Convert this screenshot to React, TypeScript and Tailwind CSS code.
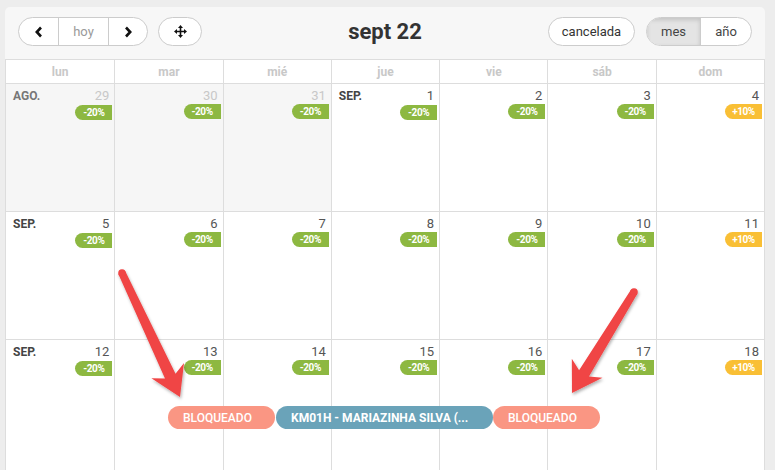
import React from "react";

type Day = { n: number; other?: boolean; label?: string; badge: string; warm?: boolean };

const weeks: Day[][] = [
  [
    { n: 29, other: true, label: "AGO.", badge: "-20%" },
    { n: 30, other: true, badge: "-20%" },
    { n: 31, other: true, badge: "-20%" },
    { n: 1, label: "SEP.", badge: "-20%" },
    { n: 2, badge: "-20%" },
    { n: 3, badge: "-20%" },
    { n: 4, badge: "+10%", warm: true },
  ],
  [
    { n: 5, label: "SEP.", badge: "-20%" },
    { n: 6, badge: "-20%" },
    { n: 7, badge: "-20%" },
    { n: 8, badge: "-20%" },
    { n: 9, badge: "-20%" },
    { n: 10, badge: "-20%" },
    { n: 11, badge: "+10%", warm: true },
  ],
  [
    { n: 12, label: "SEP.", badge: "-20%" },
    { n: 13, badge: "-20%" },
    { n: 14, badge: "-20%" },
    { n: 15, badge: "-20%" },
    { n: 16, badge: "-20%" },
    { n: 17, badge: "-20%" },
    { n: 18, badge: "+10%", warm: true },
  ],
];

const weekdays = ["lun", "mar", "mié", "jue", "vie", "sáb", "dom"];

function arrowPoints(tx: number, ty: number, px: number, py: number) {
  const dx = px - tx;
  const dy = py - ty;
  const len = Math.hypot(dx, dy);
  const d = [dx / len, dy / len];
  const n = [-d[1], d[0]];
  const hl = 29;
  const hw = 18;
  const join = 23;
  const tw = 3.8;
  const jw = 5.8;
  const at = (back: number, side: number) =>
    `${px - d[0] * back + n[0] * side},${py - d[1] * back + n[1] * side}`;
  return [
    at(len, tw),
    at(join, jw),
    at(hl, hw),
    at(0, 0),
    at(hl, -hw),
    at(join, -jw),
    at(len, -tw),
  ].join(" ");
}

function Cell({ day, first, tall }: { day: Day; first?: boolean; tall?: boolean }) {
  return (
    <div
      className={`${tall ? "h-[140px]" : "h-[128px]"} border-t border-[#dddddd] ${first ? "" : "border-l"} ${
        day.other ? "bg-[#f6f6f6]" : "bg-white"
      } flex flex-col items-stretch pt-[4px]`}
    >
      <div className="flex items-baseline justify-between pl-[7px] pr-[5px] leading-[15px]">
        <span
          className={`text-[12px] font-bold ${day.other ? "text-[#777777]" : "text-[#444444]"}`}
        >
          {day.label ?? ""}
        </span>
        <span className={`text-[13px] ${day.other ? "text-[#c8c8c8]" : "text-[#555555]"}`}>
          {day.n}
        </span>
      </div>
      <div className="flex justify-end pr-[2px] mt-[1px]">
        <span
          className={`w-[37px] h-[15px] rounded-l-full rounded-br-[8px] flex items-center justify-center text-white text-[10px] font-bold tracking-[-0.4px] ${
            day.warm ? "bg-[#f9bf35]" : "bg-[#8db841]"
          }`}
        >
          {day.badge}
        </span>
      </div>
    </div>
  );
}

export default function App() {
  return (
    <div className="relative w-[775px] h-[470px] overflow-hidden bg-[#ededed] font-['Roboto',sans-serif]">
      <div className="ml-[5px] mt-[7px] w-[760px] bg-[#f7f7f7] rounded-tl-[5px] rounded-tr-[5px]">
        <div className="grid grid-cols-[1fr_auto_1fr] items-center pl-[13px] pr-[13px] pt-[10px] pb-[13px]">
          <div className="flex items-center gap-[10px]">
            <div className="flex h-[29px] rounded-full border border-[#cccccc] bg-white overflow-hidden">
              <div className="w-[40px] flex items-center justify-center border-r border-[#cccccc]">
                <svg width="8" height="12" viewBox="0 0 8 12">
                  <polyline points="6,1.5 1.8,6 6,10.5" fill="none" stroke="#111" strokeWidth="2.6" />
                </svg>
              </div>
              <div className="w-[50px] flex items-center justify-center border-r border-[#cccccc] text-[13px] text-[#9a9a9a]">
                hoy
              </div>
              <div className="w-[38px] flex items-center justify-center">
                <svg width="8" height="12" viewBox="0 0 8 12">
                  <polyline points="2,1.5 6.2,6 2,10.5" fill="none" stroke="#111" strokeWidth="2.6" />
                </svg>
              </div>
            </div>
            <div className="w-[44px] h-[29px] rounded-full border border-[#cccccc] bg-white flex items-center justify-center">
              <svg width="13" height="13" viewBox="0 0 13 13">
                <path d="M6.5 2 V11 M2 6.5 H11" stroke="#111" strokeWidth="1.6" />
                <polygon points="6.5,0 9,3 4,3" fill="#111" />
                <polygon points="6.5,13 9,10 4,10" fill="#111" />
                <polygon points="0,6.5 3,4 3,9" fill="#111" />
                <polygon points="13,6.5 10,4 10,9" fill="#111" />
              </svg>
            </div>
          </div>
          <div className="text-[22px] font-bold text-[#333333] px-2 leading-none">sept 22</div>
          <div className="flex items-center justify-end gap-[11px]">
            <div className="w-[87px] h-[29px] rounded-full border border-[#cccccc] bg-white flex items-center justify-center text-[13px] text-[#333333]">
              cancelada
            </div>
            <div className="flex h-[29px] rounded-full border border-[#cccccc] bg-white overflow-hidden text-[13px] text-[#444444]">
              <div className="w-[54px] flex items-center justify-center bg-[#e4e4e4] shadow-[inset_0_2px_4px_rgba(0,0,0,0.15)] border-r border-[#cccccc]">
                mes
              </div>
              <div className="w-[50px] flex items-center justify-center">año</div>
            </div>
          </div>
        </div>
        <div className="w-[760px] border-r border-[#dddddd] border-l border-l-[#dddddd]">
          <div className="grid grid-cols-7 border-t border-[#dddddd] bg-white">
            {weekdays.map((w, i) => (
              <div
                key={w}
                className={`h-[23px] flex items-center justify-center text-[12px] font-bold text-[#c8c8c8] ${
                  i ? "border-l border-[#dddddd]" : ""
                }`}
              >
                {w}
              </div>
            ))}
          </div>
          {weeks.map((wk, wi) => (
            <div key={wi} className="relative grid grid-cols-7">
              {wk.map((d, di) => (
                <Cell key={di} day={d} first={di === 0} tall={wi === 2} />
              ))}
              {wi === 2 && (
                <>
                  <div className="absolute left-[162px] top-[67px] w-[107px] h-[23px] rounded-full bg-[#fa9683] text-white text-[12px] font-medium flex items-center pl-[15px]">
                    BLOQUEADO
                  </div>
                  <div className="absolute left-[270px] top-[67px] w-[217px] h-[23px] rounded-full bg-[#6aa3b9] text-white text-[12px] font-bold flex items-center pl-[15px] whitespace-nowrap">
                    KM01H - MARIAZINHA SILVA (...
                  </div>
                  <div className="absolute left-[487px] top-[67px] w-[107px] h-[23px] rounded-full bg-[#fa9683] text-white text-[12px] font-medium flex items-center pl-[15px]">
                    BLOQUEADO
                  </div>
                </>
              )}
            </div>
          ))}
        </div>
      </div>
      <svg className="absolute inset-0 pointer-events-none" width="775" height="470">
        <defs>
          <filter id="sh" x="-20%" y="-20%" width="140%" height="140%">
            <feDropShadow dx="1" dy="2" stdDeviation="1.6" floodColor="#000" floodOpacity="0.3" />
          </filter>
        </defs>
        <g filter="url(#sh)" fill="#f04444">
          <polygon points={arrowPoints(122, 273, 180, 397)} />
          <circle cx="122" cy="273" r="3.8" />
          <polygon points={arrowPoints(634, 292, 572, 393)} />
          <circle cx="634" cy="292" r="3.8" />
        </g>
      </svg>
    </div>
  );
}
